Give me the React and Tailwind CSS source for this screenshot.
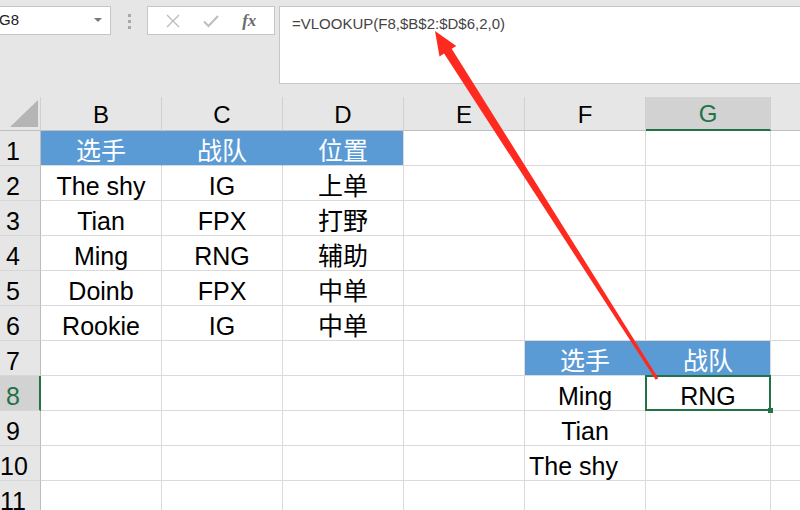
import React from 'react';

const GREEN = '#217346';

const COLS = [
    { key: 'B', w: 'w-[121px]' },
    { key: 'C', w: 'w-[121px]' },
    { key: 'D', w: 'w-[121px]' },
    { key: 'E', w: 'w-[121px]' },
    { key: 'F', w: 'w-[121px]' },
    { key: 'G', w: 'w-[125px]', selected: true },
    { key: '', w: 'w-[60px]' },
];

const ROWS = [
    { n: 1, cells: { B: { t: '选手', blue: true }, C: { t: '战队', blue: true }, D: { t: '位置', blue: true, last: true } } },
    { n: 2, cells: { B: { t: 'The shy' }, C: { t: 'IG' }, D: { t: '上单' } } },
    { n: 3, cells: { B: { t: 'Tian' }, C: { t: 'FPX' }, D: { t: '打野' } } },
    { n: 4, cells: { B: { t: 'Ming' }, C: { t: 'RNG' }, D: { t: '辅助' } } },
    { n: 5, cells: { B: { t: 'Doinb' }, C: { t: 'FPX' }, D: { t: '中单' } } },
    { n: 6, cells: { B: { t: 'Rookie' }, C: { t: 'IG' }, D: { t: '中单' } } },
    { n: 7, cells: { F: { t: '选手', blue: true }, G: { t: '战队', blue: true, last: true } } },
    { n: 8, selected: true, cells: { F: { t: 'Ming' }, G: { t: 'RNG', active: true } } },
    { n: 9, cells: { F: { t: 'Tian' } } },
    { n: 10, cells: { F: { t: 'The shy', left: true } } },
    { n: 11, cells: {} },
];

function FormulaBar() {
    return (
        <div className="h-[97px] flex items-start pt-[6px]">
            {/* Name box */}
            <div className="w-[111px] h-[29px] shrink-0 bg-white border border-l-0 border-[#c6c6c6] flex items-center justify-between pr-[8px]">
                <span className="-ml-[1px] text-[15px] text-[#222]">G8</span>
                <svg width="8" height="5" viewBox="0 0 8 5">
                    <polygon points="0,0 8,0 4,4" fill="#7a7a7a" />
                </svg>
            </div>
            {/* Separator dots */}
            <div className="w-[36px] shrink-0 flex flex-col items-center gap-[3px] pt-[8px]">
                <span className="w-[3px] h-[3px] bg-[#a8a8a8]" />
                <span className="w-[3px] h-[3px] bg-[#a8a8a8]" />
                <span className="w-[3px] h-[3px] bg-[#a8a8a8]" />
            </div>
            {/* Cancel / enter / fx */}
            <div className="w-[128px] h-[29px] shrink-0 bg-white border border-[#c6c6c6] flex items-center justify-around px-[6px]">
                <svg width="14" height="14" viewBox="0 0 14 14">
                    <path d="M1 1 L13 13 M13 1 L1 13" stroke="#bdbdbd" strokeWidth="1.4" fill="none" />
                </svg>
                <svg width="16" height="14" viewBox="0 0 16 14">
                    <path d="M1 7.5 L5.5 12 L15 2" stroke="#bdbdbd" strokeWidth="2" fill="none" />
                </svg>
                <span className="font-['Liberation_Serif',serif] italic font-bold text-[17px] text-[#6b6b6b] leading-none">fx</span>
            </div>
            {/* Formula input */}
            <div className="ml-[4px] flex-1 h-[78px] bg-white border border-r-0 border-[#c6c6c6] pl-[12px] pt-[5px]">
                <span className="text-[15px] leading-[18px] text-[#444]">=VLOOKUP(F8,$B$2:$D$6,2,0)</span>
            </div>
        </div>
    );
}

function ColumnHeaders() {
    return (
        <div className="h-[34px] flex">
            <div className="w-[41px] shrink-0 border-r border-b border-r-[#d0d0d0] border-b-[#bfbfbf]">
                <svg width="40" height="33" viewBox="0 0 40 33">
                    <polygon points="10,30 38,30 38,3" fill="#b5b5b5" />
                </svg>
            </div>
            {COLS.map((c) => (
                <div
                    key={c.key || 'h'}
                    className={`${c.w} shrink-0 flex items-end justify-center pb-[3px] text-[24px] leading-[24px] border-r border-r-[#d0d0d0] ${
                        c.selected ? 'bg-[#d2d2d2] text-[#217346] border-b-2 border-b-[#217346]' : 'text-black border-b border-b-[#bfbfbf]'
                    }`}
                >
                    {c.key}
                </div>
            ))}
        </div>
    );
}

function Cell({ col, cell }) {
    const blue = cell && cell.blue;
    const rightBorder = blue && !cell.last ? 'border-r-[#5b9bd5]' : 'border-r-[#dadada]';
    return (
        <div
            className={`${col.w} shrink-0 relative flex items-end pb-[1px] text-[25px] leading-[25px] border-r border-b border-b-[#dadada] ${rightBorder} ${
                blue ? 'bg-[#5b9bd5] text-white' : 'bg-white text-black'
            } ${cell && cell.left ? 'justify-start pl-[4px]' : 'justify-center'}`}
        >
            {cell && <span className="whitespace-nowrap">{cell.t}</span>}
            {cell && cell.active && (
                <>
                    <div className="absolute inset-[-1px] border-2 border-[#217346] z-10" />
                    <div className="absolute -right-[3px] -bottom-[3px] w-[5px] h-[5px] bg-[#217346] z-20" />
                </>
            )}
        </div>
    );
}

function Row({ row }) {
    return (
        <div className="h-[35px] flex">
            <div
                className={`w-[41px] shrink-0 flex items-end pb-[1px] border-b border-b-[#d6d6d6] ${
                    row.selected ? 'bg-[#d2d2d2] text-[#217346] border-r-2 border-r-[#217346]' : 'bg-[#e6e6e6] text-black border-r border-r-[#bdbdbd]'
                }`}
            >
                <span className="w-[26px] text-center text-[25px] leading-[25px] whitespace-nowrap">{row.n}</span>
            </div>
            {COLS.map((c) => (
                <Cell key={c.key || 'h'} col={c} cell={row.cells[c.key]} />
            ))}
        </div>
    );
}

function Arrow() {
    // red annotation arrow from G8 up to the range in the formula
    return (
        <svg className="absolute inset-0 pointer-events-none z-30" width="800" height="510" viewBox="0 0 800 510">
            <polygon
                points="435,31 456.3,45.9 451.7,48.8 658.3,378.2 655.7,379.8 444.1,53.6 439.5,56.5"
                fill="#ff2a1f"
            />
        </svg>
    );
}

export default function App() {
    return (
        <div className="relative w-[800px] h-[510px] overflow-hidden bg-[#e6e6e6] font-['Liberation_Sans','Noto_Sans_CJK_SC',sans-serif]">
            <FormulaBar />
            <ColumnHeaders />
            {ROWS.map((r) => (
                <Row key={r.n} row={r} />
            ))}
            <Arrow />
        </div>
    );
}
